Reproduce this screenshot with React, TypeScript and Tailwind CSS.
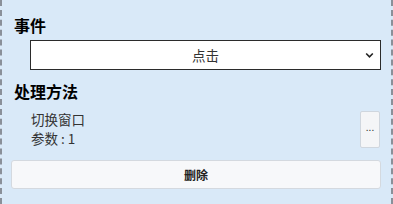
export default function App() {
  return (
    <div
      className="w-[393px] h-[204px] bg-[#d9e9f8] border-x-2 border-dashed border-[#8a9099] px-[9px] pt-[14px] text-[#222]"
      style={{ fontFamily: '"Noto Sans CJK SC", "Noto Sans", sans-serif' }}
    >
      <h2 className="text-[16px] font-bold leading-[22px] pl-[3px] text-black">事件</h2>
      <div className="mt-[4px] ml-[19px] mr-[1px] h-[30px] bg-white border border-[#2b2b2b] flex items-center relative">
        <span className="flex-1 text-center text-[13.5px] text-[#333]">点击</span>
        <svg className="absolute right-[6px] top-[11px]" width="9" height="7" viewBox="0 0 9 7">
          <path d="M1.2 1.5 L4.5 4.8 L7.8 1.5" fill="none" stroke="#222" strokeWidth="1.6" />
        </svg>
      </div>
      <h2 className="mt-[10px] text-[16px] font-bold leading-[22px] pl-[3px] text-black">处理方法</h2>
      <div className="flex items-center mt-[8px] mr-[2px]">
        <div className="flex-1 pl-[20px] text-[13.5px] leading-[19px] text-[#333]">
          <div>切换窗口</div>
          <div>参数 : 1</div>
        </div>
        <button className="w-[20px] h-[37px] bg-[#f4f5f7] border border-[#cfd6de] rounded-[2px] text-[10px] leading-none text-[#333] flex items-center justify-center pb-[4px]">
          ...
        </button>
      </div>
      <button className="mt-[12px] w-[370px] h-[29px] bg-[#f7f8fa] border border-[#d4d9df] rounded-[3px] text-[12px] font-bold text-[#222] flex items-center justify-center">
        删除
      </button>
    </div>
  );
}
